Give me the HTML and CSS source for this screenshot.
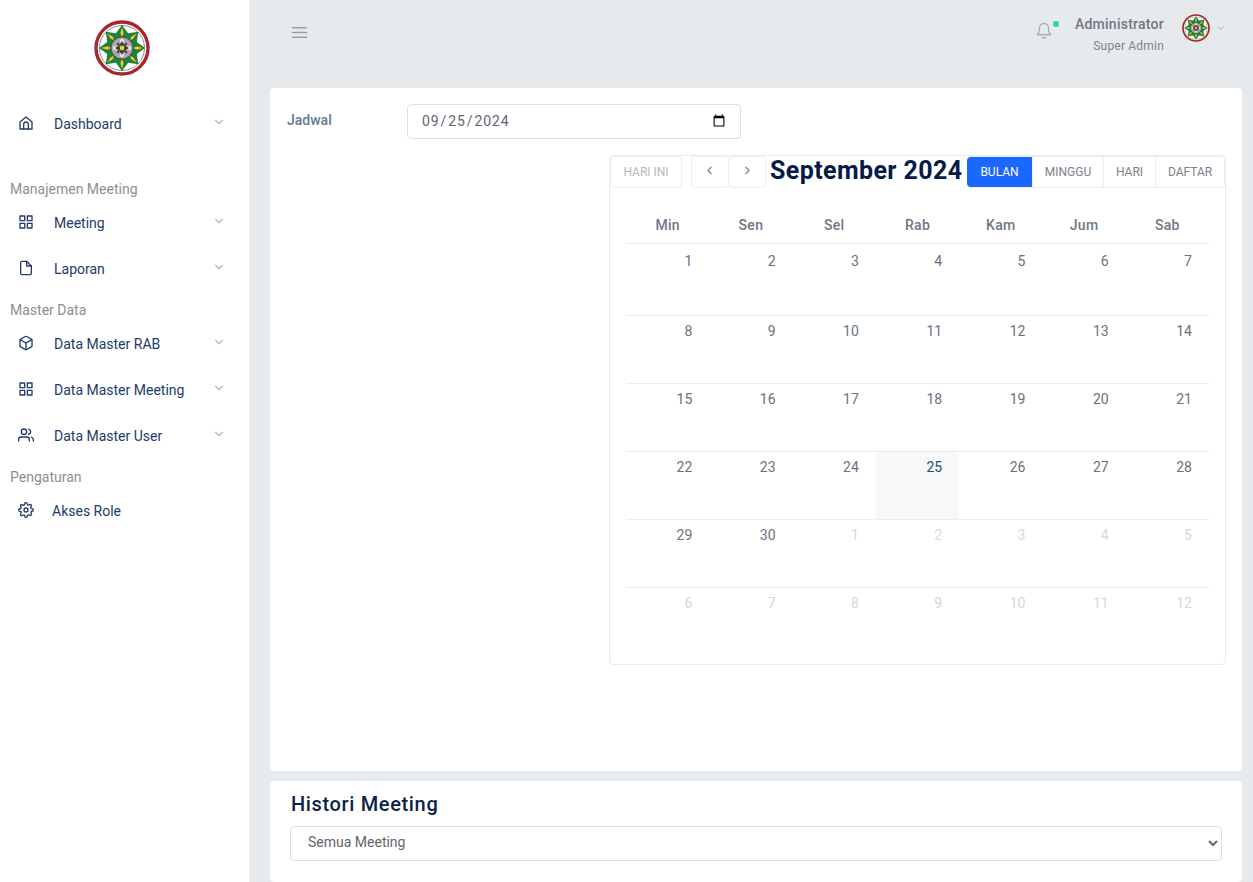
FILE: index.html
```html
<!DOCTYPE html>
<html lang="en">
<head>
    <meta charset="UTF-8">
    <meta name="viewport" content="width=device-width, initial-scale=1.0">
    <title>Jadwal Meeting</title>
    <link rel="stylesheet" href="styles.css">
</head>
<body>
    <svg class="defs" width="0" height="0">
        <symbol id="emblem" viewBox="0 0 56 56">
            <circle cx="28" cy="28" r="26" fill="#fff" stroke="#a3282f" stroke-width="3.4"/>
            <circle cx="28" cy="28" r="22.500" fill="none" stroke="#8d8d8d" stroke-width="1"/>
            <path fill="#12893c" d="M28 5 L34.100 13.200 L44.300 11.700 L42.800 21.900 L51 28 L42.800 34.100 L44.300 44.300 L34.100 42.800 L28 51 L21.900 42.800 L11.700 44.300 L13.200 34.100 L5 28 L13.200 21.900 L11.700 11.700 L21.900 13.200 Z"/>
            <g fill="#e5cf2c" stroke="#3f452a" stroke-width=".5">
                <path d="M28 6 L30 13 L28 18 L26 13 Z"/>
                <path d="M28 50 L30 43 L28 38 L26 43 Z"/>
                <path d="M6 28 L13 30 L18 28 L13 26 Z"/>
                <path d="M50 28 L43 30 L38 28 L43 26 Z"/>
                <path d="M12.500 12.500 L19 16.500 L21 21 L16.500 19 Z"/>
                <path d="M43.500 12.500 L37 16.500 L35 21 L39.500 19 Z"/>
                <path d="M12.500 43.500 L19 39.500 L21 35 L16.500 37 Z"/>
                <path d="M43.500 43.500 L37 39.500 L35 35 L39.500 37 Z"/>
            </g>
            <circle cx="28" cy="28" r="12" fill="#4a5a45"/>
            <circle cx="28" cy="28" r="10.500" fill="#a9a9ab"/>
            <g fill="#e4e4e6">
                <circle cx="28" cy="21" r="2.200"/>
                <circle cx="28" cy="35" r="2.200"/>
                <circle cx="21" cy="28" r="2.200"/>
                <circle cx="35" cy="28" r="2.200"/>
            </g>
            <path fill="#34363a" d="M28 21 L30.500 25.500 L35 28 L30.500 30.500 L28 35 L25.500 30.500 L21 28 L25.500 25.500 Z M22.500 22.500 L26 24 L24 26 Z M33.500 22.500 L32 26 L30 24 Z M22.500 33.500 L24 30 L26 32 Z M33.500 33.500 L30 32 L32 30 Z"/>
            <circle cx="28" cy="28" r="2.400" fill="#efd51c"/>
        </symbol>
        <symbol id="chev" viewBox="0 0 24 24"><path d="M6 9l6 6 6-6"/></symbol>
    </svg>

    <div class="layout">
        <aside class="sidebar">
            <div class="logo"><svg width="56" height="56"><use href="#emblem"/></svg></div>

            <a class="nav-item">
                <svg class="nav-icon" viewBox="0 0 24 24"><path d="M3 21V10.500L12 3l9 7.500V21z"/><path d="M8.500 21v-7a3.500 3.500 0 0 1 7 0v7"/></svg>
                <span>Dashboard</span>
                <svg class="chev"><use href="#chev"/></svg>
            </a>

            <p class="nav-label first">Manajemen Meeting</p>
            <a class="nav-item">
                <svg class="nav-icon" viewBox="0 0 24 24"><rect x="3" y="3" width="7" height="7"/><rect x="14" y="3" width="7" height="7"/><rect x="14" y="14" width="7" height="7"/><rect x="3" y="14" width="7" height="7"/></svg>
                <span>Meeting</span>
                <svg class="chev"><use href="#chev"/></svg>
            </a>
            <a class="nav-item">
                <svg class="nav-icon" viewBox="0 0 24 24"><path d="M13 2H6a2 2 0 0 0-2 2v16a2 2 0 0 0 2 2h12a2 2 0 0 0 2-2V9z"/><path d="M13 2v7h7"/></svg>
                <span>Laporan</span>
                <svg class="chev"><use href="#chev"/></svg>
            </a>

            <p class="nav-label">Master Data</p>
            <a class="nav-item">
                <svg class="nav-icon" viewBox="0 0 24 24"><path d="M21 16V8a2 2 0 0 0-1-1.730l-7-4a2 2 0 0 0-2 0l-7 4A2 2 0 0 0 3 8v8a2 2 0 0 0 1 1.730l7 4a2 2 0 0 0 2 0l7-4A2 2 0 0 0 21 16z"/><path d="M3.270 6.960L12 12.010l8.730-5.050"/><path d="M12 22.080V12"/></svg>
                <span>Data Master RAB</span>
                <svg class="chev"><use href="#chev"/></svg>
            </a>
            <a class="nav-item">
                <svg class="nav-icon" viewBox="0 0 24 24"><rect x="3" y="3" width="7" height="7"/><rect x="14" y="3" width="7" height="7"/><rect x="14" y="14" width="7" height="7"/><rect x="3" y="14" width="7" height="7"/></svg>
                <span>Data Master Meeting</span>
                <svg class="chev"><use href="#chev"/></svg>
            </a>
            <a class="nav-item">
                <svg class="nav-icon" viewBox="0 0 24 24"><path d="M17 21v-2a4 4 0 0 0-4-4H5a4 4 0 0 0-4 4v2"/><circle cx="9" cy="7" r="4"/><path d="M23 21v-2a4 4 0 0 0-3-3.870"/><path d="M16 3.130a4 4 0 0 1 0 7.750"/></svg>
                <span>Data Master User</span>
                <svg class="chev"><use href="#chev"/></svg>
            </a>

            <p class="nav-label">Pengaturan</p>
            <a class="nav-item plain">
                <svg class="nav-icon" viewBox="0 0 24 24"><circle cx="12" cy="12" r="3"/><path d="M19.400 15a1.650 1.650 0 0 0 .33 1.820l.06.06a2 2 0 1 1-2.830 2.830l-.06-.06a1.650 1.650 0 0 0-2.820 1.170V21a2 2 0 1 1-4 0v-.09A1.650 1.650 0 0 0 7.260 19.740l-.06.06a2 2 0 1 1-2.830-2.830l.06-.06a1.650 1.650 0 0 0-1.170-2.820H3a2 2 0 1 1 0-4h.09A1.650 1.650 0 0 0 4.260 7.260l-.06-.06a2 2 0 1 1 2.830-2.830l.06.06a1.650 1.650 0 0 0 2.820-1.170V3a2 2 0 1 1 4 0v.09a1.650 1.650 0 0 0 2.820 1.170l.06-.06a2 2 0 1 1 2.830 2.830l-.06.06a1.650 1.650 0 0 0 1.170 2.820H21a2 2 0 1 1 0 4h-.09a1.650 1.650 0 0 0-1.510 1z"/></svg>
                <span>Akses Role</span>
            </a>
        </aside>

        <div class="main">
            <header class="topbar">
                <svg class="menu-btn" viewBox="0 0 24 24"><path d="M3 6h18M3 12h18M3 18h18"/></svg>
                <div class="top-right">
                    <div class="bell">
                        <svg viewBox="0 0 24 24"><path d="M18 8a6 6 0 0 0-12 0c0 7-3 9-3 9h18s-3-2-3-9"/><path d="M10 21h4"/></svg>
                        <span class="dot"></span>
                    </div>
                    <div class="user">
                        <div class="user-name">Administrator</div>
                        <div class="user-role">Super Admin</div>
                    </div>
                    <svg class="avatar" width="28" height="28"><use href="#emblem"/></svg>
                    <svg class="chev top-chev"><use href="#chev"/></svg>
                </div>
            </header>

            <section class="card schedule">
                <div class="date-row">
                    <label class="date-label" for="jadwal">Jadwal</label>
                    <input class="date-input" type="date" id="jadwal" value="2024-09-25">
                </div>

                <div class="calendar">
                    <div class="cal-toolbar">
                        <button class="cal-btn today">HARI INI</button>
                        <div class="cal-nav">
                            <button class="cal-btn arrow"><svg viewBox="0 0 24 24"><path d="M15 18l-6-6 6-6"/></svg></button>
                            <button class="cal-btn arrow"><svg viewBox="0 0 24 24"><path d="M9 18l6-6-6-6"/></svg></button>
                        </div>
                        <h2 class="cal-title">September 2024</h2>
                        <div class="cal-views">
                            <button class="view-btn active">BULAN</button>
                            <button class="view-btn">MINGGU</button>
                            <button class="view-btn">HARI</button>
                            <button class="view-btn">DAFTAR</button>
                        </div>
                    </div>

                    <div class="cal-grid">
                        <div class="dow">Min</div><div class="dow">Sen</div><div class="dow">Sel</div><div class="dow">Rab</div><div class="dow">Kam</div><div class="dow">Jum</div><div class="dow">Sab</div>

                        <div class="day tall">1</div><div class="day tall">2</div><div class="day tall">3</div><div class="day tall">4</div><div class="day tall">5</div><div class="day tall">6</div><div class="day tall">7</div>
                        <div class="day">8</div><div class="day">9</div><div class="day">10</div><div class="day">11</div><div class="day">12</div><div class="day">13</div><div class="day">14</div>
                        <div class="day">15</div><div class="day">16</div><div class="day">17</div><div class="day">18</div><div class="day">19</div><div class="day">20</div><div class="day">21</div>
                        <div class="day">22</div><div class="day">23</div><div class="day">24</div><div class="day now">25</div><div class="day">26</div><div class="day">27</div><div class="day">28</div>
                        <div class="day">29</div><div class="day">30</div><div class="day off">1</div><div class="day off">2</div><div class="day off">3</div><div class="day off">4</div><div class="day off">5</div>
                        <div class="day off">6</div><div class="day off">7</div><div class="day off">8</div><div class="day off">9</div><div class="day off">10</div><div class="day off">11</div><div class="day off">12</div>
                    </div>
                </div>
            </section>

            <section class="card history">
                <h3 class="history-title">Histori Meeting</h3>
                <select class="history-select">
                    <option>Semua Meeting</option>
                </select>
            </section>
        </div>
    </div>
</body>
</html>
```

FILE: styles.css
```css
* {
    box-sizing: border-box;
}

html,
body {
    height: 100%;
    overflow: hidden;
}

body {
    margin: 0;
    background-color: #e7eaed;
    font-family: Roboto, "Liberation Sans", sans-serif;
    font-size: 14px;
    color: #6e7785;
}

.defs {
    position: absolute;
}

.layout {
    display: flex;
    height: 882px;
}

/* sidebar */
.sidebar {
    width: 250px;
    flex-shrink: 0;
    background-color: #fff;
    border-right: 1px solid #eef0f3;
}

.logo {
    display: flex;
    justify-content: center;
    padding: 20px 6px 0 0;
    height: 101px;
}

.nav-item {
    display: flex;
    align-items: center;
    height: 46px;
    padding: 0 18px;
    color: #233b6b;
}

.nav-item span {
    flex: 1;
}

.nav-icon {
    width: 16px;
    height: 16px;
    margin-right: 20px;
    fill: none;
    stroke: #233b6b;
    stroke-width: 2;
    stroke-linecap: round;
    stroke-linejoin: round;
    transform: translateY(-1px);
}

.nav-item.plain .nav-icon {
    margin-right: 18px;
}

.nav-item.plain span {
    margin-top: -1px;
}

.chev {
    width: 14px;
    height: 14px;
    margin: 0 0 3px;
    fill: none;
    stroke: #b0b5bd;
    stroke-width: 2;
    stroke-linecap: round;
    stroke-linejoin: round;
}

.nav-item .chev {
    transform: translate(-5px, -1px);
}

.nav-label {
    margin: 9px 0 2px;
    padding-left: 10px;
    line-height: 18px;
    color: #8b9097;
}

.nav-label.first {
    margin-top: 33px;
}

/* main column */
.main {
    flex: 1;
    min-width: 0;
    padding: 0 11px 0 20px;
}

.topbar {
    display: flex;
    justify-content: space-between;
    align-items: center;
    height: 88px;
    padding: 0 15px 24px 20px;
}

.menu-btn {
    width: 19px;
    height: 19px;
    fill: none;
    stroke: #9aa0a8;
    stroke-width: 1.8;
    stroke-linecap: round;
}

.top-right {
    display: flex;
    align-items: center;
}

.bell {
    position: relative;
    width: 18px;
    height: 18px;
    margin: 0 22px 0 0;
    transform: translateY(-1px);
}

.bell svg {
    width: 18px;
    height: 18px;
    fill: none;
    stroke: #a9afb6;
    stroke-width: 1.8;
    stroke-linecap: round;
    stroke-linejoin: round;
}

.dot {
    position: absolute;
    top: -1px;
    right: -6px;
    width: 6px;
    height: 6px;
    border-radius: 50%;
    background-color: #2ed8a3;
}

.user {
    margin: 4px 18px 0 0;
    text-align: right;
}

.user-name {
    font-weight: 500;
    letter-spacing: 0.25px;
    line-height: 20px;
    color: #6e7785;
}

.user-role {
    margin-top: 3px;
    font-size: 12px;
    letter-spacing: 0.2px;
    line-height: 18px;
    color: #7d8591;
}

.avatar {
    margin-bottom: 8px;
}

.top-chev {
    width: 12px;
    height: 12px;
    margin: 0 0 8px 5px;
}

/* cards */
.card {
    background-color: #fff;
    border-radius: 4px;
}

.schedule {
    height: 683px;
    padding: 16px 16px 0 17px;
}

.date-row {
    display: flex;
    align-items: flex-start;
}

.date-label {
    width: 120px;
    padding-top: 8px;
    font-weight: 500;
    color: #5f7a94;
}

.date-input {
    width: 334px;
    height: 35px;
    padding: 0 12px 2px 13px;
    border: 1px solid #dcdfe8;
    border-radius: 4px;
    background-color: #fff;
    font: inherit;
    letter-spacing: 0.9px;
    color: #5f6670;
    outline: none;
}

/* calendar */
.calendar {
    width: 617px;
    height: 510px;
    margin: 16px 0 0 auto;
    border: 1px solid #e9ebf0;
    border-radius: 4px;
}

.cal-toolbar {
    display: flex;
    align-items: center;
    height: 32px;
}

.cal-btn {
    height: 32px;
    padding: 0;
    border: 1px solid #eceef2;
    border-radius: 4px;
    background-color: #fff;
    font: inherit;
    font-size: 12px;
    color: #b5b9bf;
}

.today {
    width: 72px;
}

.cal-nav {
    display: flex;
    margin-left: 9px;
}

.arrow {
    width: 38px;
    display: flex;
    align-items: center;
    justify-content: center;
}

.arrow + .arrow {
    margin-left: -1px;
}

.arrow svg {
    width: 13px;
    height: 13px;
    fill: none;
    stroke: #7d838c;
    stroke-width: 2;
    stroke-linecap: round;
    stroke-linejoin: round;
    transform: translate(-1px, -2px);
}

.arrow + .arrow svg {
    transform: translate(0, -2px);
}

.cal-title {
    flex: 1;
    margin: 0 0 2px 4px;
    font-size: 25px;
    font-weight: 700;
    line-height: 30px;
    letter-spacing: 0.4px;
    color: #061a47;
    white-space: nowrap;
}

.cal-views {
    display: flex;
    height: 32px;
    border: 1px solid #eceef2;
    border-left: 0;
    border-radius: 4px;
}

.view-btn {
    width: 52px;
    padding: 0;
    border: 0;
    border-left: 1px solid #eceef2;
    background-color: #fff;
    font: inherit;
    font-size: 12px;
    color: #7a818b;
}

.view-btn:nth-child(2) {
    width: 71px;
}

.view-btn:last-child {
    width: 69px;
    border-radius: 0 4px 4px 0;
}

.view-btn.active {
    width: 65px;
    border: 0;
    border-radius: 4px 0 0 4px;
    background-color: #1c67ff;
    color: #fff;
}

.cal-grid {
    display: grid;
    grid-template-columns: repeat(7, 1fr);
    margin: 0 16px;
}

.dow {
    height: 56px;
    padding-top: 28px;
    line-height: 18px;
    text-align: center;
    font-weight: 500;
    letter-spacing: 0.3px;
    color: #6e7785;
    border-bottom: 1px solid #e9ebf0;
}

.day {
    height: 68px;
    padding: 4px 17px 0 0;
    line-height: 22px;
    text-align: right;
    color: #6a7280;
    border-bottom: 1px solid #e9ebf0;
}

.day.tall {
    height: 72px;
    padding-top: 6px;
}

.day:nth-last-child(-n+7) {
    border-bottom: 0;
}

.day.now {
    background-color: #f6f8fa;
    border-radius: 4px;
    color: #1f4f66;
}

.day.off {
    color: #d5d8dc;
}

/* history */
.history {
    height: 101px;
    margin-top: 10px;
    padding: 10px 20px 0 20px;
}

.history-title {
    margin: 0 0 8px 1px;
    font-size: 20px;
    font-weight: 500;
    letter-spacing: 0.65px;
    line-height: 27px;
    color: #0d2248;
}

.history-select {
    display: block;
    width: 100%;
    height: 35px;
    padding: 0 13px 3px;
    border: 1px solid #dcdfe8;
    border-radius: 4px;
    background-color: #fff;
    font: inherit;
    color: #5f6670;
    outline: none;
}
```
